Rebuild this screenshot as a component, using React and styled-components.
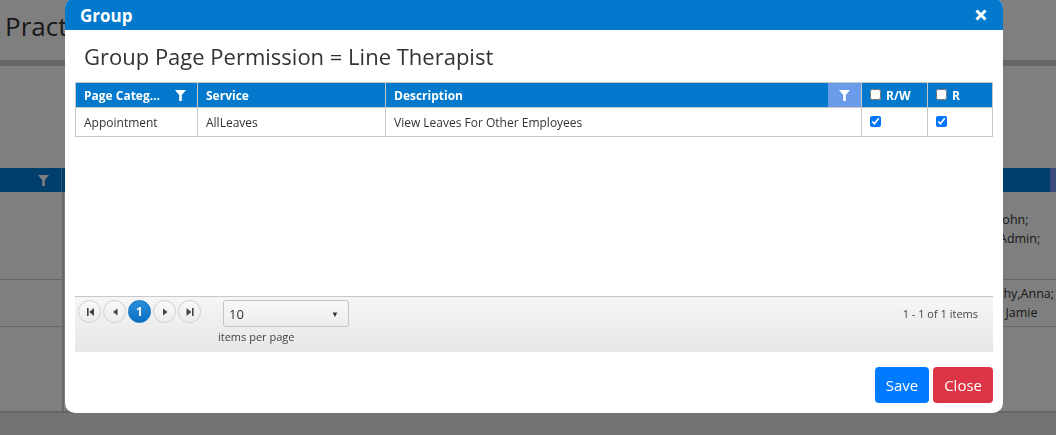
import React from 'react';
import styled, { createGlobalStyle } from 'styled-components';

const FONT = `"Segoe UI", "Open Sans", "Noto Sans", sans-serif`;

const COLUMNS = [
  { id: 'category', title: 'Page Category', filter: true },
  { id: 'service', title: 'Service' },
  { id: 'description', title: 'Description', filter: true, active: true },
  { id: 'rw', title: 'R/W', check: true },
  { id: 'r', title: 'R', check: true },
];

const ROWS = [
  { id: 1, category: 'Appointment', service: 'AllLeaves', description: 'View Leaves For Other Employees', rw: true, r: true },
];

// only the tail of these names shows past the dialog edge
const BG_ROWS = [
  { id: 1, height: 88, lines: ['John;', 'Admin;'] },
  { id: 2, height: 47, lines: ['thy,Anna;', ', Jamie'] },
  { id: 3, height: 85, lines: [] },
];

const GlobalStyle = createGlobalStyle`
  html, body {
    margin: 0;
    padding: 0;
    height: 100%;
    overflow: hidden;
    font-family: ${FONT};
    background: #fff;
  }
`;

const Funnel = ({ color = '#fff' }) => (
  <svg width="11" height="11" viewBox="0 0 11 11">
    <polygon points="0,0 11,0 6.8,5 6.8,11 4.2,11 4.2,5" fill={color} />
  </svg>
);

const PagerIcon = ({ kind }) => {
  const paths = {
    first: 'M2 1 H3.6 V9 H2 Z M9 1 V9 L4.2 5 Z',
    prev: 'M7.5 1.5 V8.5 L3 5 Z',
    next: 'M3 1.5 V8.5 L7.5 5 Z',
    last: 'M1.5 1 V9 L6.3 5 Z M7 1 H8.6 V9 H7 Z',
  };
  return (
    <svg width="10" height="10" viewBox="0 0 10 10">
      <path d={paths[kind]} fill="#444" />
    </svg>
  );
};

const App = () => (
  <>
    <GlobalStyle />
    <Page>
      <PageHeader>
        <PageTitle>Practice Management</PageTitle>
      </PageHeader>
      <HeaderRule />
      <Toolbar />
      <BgGrid>
        <BgHead>
          <BgHeadCell>
            <Funnel />
          </BgHeadCell>
          <BgHeadFill />
          <BgScroll />
        </BgHead>
        {BG_ROWS.map(row => (
          <BgRow key={row.id} $height={row.height}>
            <BgFirstCell />
            <BgFill />
            <BgTextCell>
              {row.lines.map(line => (
                <div key={line}>{line}</div>
              ))}
            </BgTextCell>
          </BgRow>
        ))}
      </BgGrid>
      <BgFooter />
    </Page>
    <Overlay />
    <Modal>
      <ModalHeader>
        <ModalTitle>Group</ModalTitle>
        <CloseIcon width="12" height="12" viewBox="0 0 12 12">
          <path d="M1.5 1.5 L10.5 10.5 M10.5 1.5 L1.5 10.5" stroke="#fff" strokeWidth="3" />
        </CloseIcon>
      </ModalHeader>
      <ModalBody>
        <Heading>Group Page Permission = Line Therapist</Heading>
        <Grid>
          <Table>
            {COLUMNS.map(col => (
              <HeadCell key={col.id}>
                {col.check && <Check type="checkbox" readOnly />}
                <HeadText>{col.title}</HeadText>
                {col.filter && (
                  <FilterButton $active={col.active}>
                    <Funnel />
                  </FilterButton>
                )}
              </HeadCell>
            ))}
            {ROWS.map(row =>
              COLUMNS.map(col => (
                <Cell key={`${row.id}-${col.id}`}>
                  {col.check ? <Check type="checkbox" checked readOnly /> : row[col.id]}
                </Cell>
              )),
            )}
          </Table>
          <GridSpace />
          <Pager>
            <PagerButtons>
              <PageButton><PagerIcon kind="first" /></PageButton>
              <PageButton><PagerIcon kind="prev" /></PageButton>
              <PageButton $active>1</PageButton>
              <PageButton><PagerIcon kind="next" /></PageButton>
              <PageButton><PagerIcon kind="last" /></PageButton>
            </PagerButtons>
            <PageSizes>
              <SizeSelect>
                <span>10</span>
                <Caret>▼</Caret>
              </SizeSelect>
              <SizeLabel>items per page</SizeLabel>
            </PageSizes>
            <PagerInfo>1 - 1 of 1 items</PagerInfo>
          </Pager>
        </Grid>
      </ModalBody>
      <ModalFooter>
        <Button $color="#007bff">Save</Button>
        <Button $color="#dc3545">Close</Button>
      </ModalFooter>
    </Modal>
  </>
);

export default App;

/* background page */

const Page = styled.div`
  display: flex;
  flex-direction: column;
  height: 435px;
`;

const PageHeader = styled.div`
  height: 60px;
  display: flex;
  align-items: flex-start;
  padding-left: 5px;
`;

const PageTitle = styled.h1`
  margin: 8px 0 0;
  font-size: 26px;
  font-weight: 400;
  color: #333;
  white-space: nowrap;
`;

const HeaderRule = styled.div`
  height: 6px;
  background: #cdcdcd;
`;

const Toolbar = styled.div`
  height: 102px;
`;

const BgGrid = styled.div`
  display: flex;
  flex-direction: column;
  flex: 1;
`;

const BgHead = styled.div`
  display: flex;
  height: 24px;
  background: #007ed6;
`;

const BgHeadCell = styled.div`
  width: 62px;
  display: flex;
  align-items: center;
  justify-content: flex-end;
  padding-right: 12px;
  box-sizing: border-box;
  border-right: 1px solid #6aa9dc;
`;

const BgHeadFill = styled.div`
  flex: 1;
`;

const BgScroll = styled.div`
  width: 6px;
  background: #7494f4;
`;

const BgRow = styled.div`
  display: flex;
  height: ${({ $height }) => $height}px;
  border-bottom: 1px solid #cfcfcf;
  box-sizing: border-box;
  &:last-child {
    border-bottom: none;
    height: auto;
    flex: 1;
  }
`;

const BgFirstCell = styled.div`
  width: 62px;
  border-right: 2px solid #cfcfcf;
`;

const BgFill = styled.div`
  flex: 1;
`;

const BgTextCell = styled.div`
  width: 57px;
  display: flex;
  flex-direction: column;
  justify-content: center;
  font-size: 12.5px;
  line-height: 19px;
  color: #333;
  white-space: nowrap;
  padding-bottom: 14px;
  ${BgRow}:nth-child(3) & {
    padding-bottom: 0;
  }
`;

const BgFooter = styled.div`
  height: 22px;
  background: #e6e6e6;
  border-top: 2px solid #cbcbcb;
`;

const Overlay = styled.div`
  position: fixed;
  inset: 0;
  background: rgba(0, 0, 0, 0.5);
`;

/* modal */

const Modal = styled.div`
  position: fixed;
  left: 65px;
  top: -2px;
  width: 938px;
  height: 415px;
  background: #fff;
  border-radius: 10px;
  overflow: hidden;
  display: flex;
  flex-direction: column;
`;

const ModalHeader = styled.div`
  height: 32px;
  flex: none;
  background: #0279cc;
  display: flex;
  align-items: center;
  justify-content: space-between;
  padding: 2px 16px 0 15px;
  box-sizing: border-box;
`;

const ModalTitle = styled.div`
  color: #fff;
  font-size: 17px;
  font-weight: 700;
`;

const CloseIcon = styled.svg`
  display: block;
`;

const ModalBody = styled.div`
  padding: 0 10px;
  display: flex;
  flex-direction: column;
`;

const Heading = styled.h2`
  margin: 12px 0 12px 9px;
  font-size: 22px;
  line-height: 28px;
  font-weight: 400;
  color: #333;
`;

const Grid = styled.div`
  height: 270px;
  display: flex;
  flex-direction: column;
`;

const Table = styled.div`
  display: grid;
  grid-template-columns: 122px 188px 476px 66px 1fr;
  border-top: 1px solid #c8c8c8;
  border-left: 1px solid #c8c8c8;
`;

const HeadCell = styled.div`
  height: 25px;
  background: #0279cc;
  color: #fff;
  font-size: 12px;
  font-weight: 700;
  display: flex;
  align-items: center;
  padding-left: 8px;
  box-sizing: border-box;
  border-right: 1px solid #c8c8c8;
  border-bottom: 1px solid #c8c8c8;
  min-width: 0;
`;

const HeadText = styled.span`
  flex: 1;
  min-width: 0;
  overflow: hidden;
  text-overflow: ellipsis;
  white-space: nowrap;
`;

const FilterButton = styled.div`
  width: 33px;
  height: 100%;
  flex: none;
  display: flex;
  align-items: center;
  justify-content: center;
  background: ${({ $active }) => ($active ? '#6b9ceb' : 'transparent')};
`;

const Check = styled.input`
  width: 11px;
  height: 11px;
  margin: 0 5px 1px 0;
  accent-color: #0075ff;
`;

const Cell = styled.div`
  height: 29px;
  display: flex;
  align-items: center;
  padding-left: 8px;
  box-sizing: border-box;
  font-size: 12px;
  color: #333;
  border-right: 1px solid #c8c8c8;
  border-bottom: 1px solid #c8c8c8;
  white-space: nowrap;
`;

const GridSpace = styled.div`
  flex: 1;
`;

const Pager = styled.div`
  height: 56px;
  box-sizing: border-box;
  border-top: 1px solid #c8c8c8;
  background: linear-gradient(#f6f6f6, #e8e6e6);
  display: flex;
  align-items: flex-start;
  padding: 3px 15px 0 3px;
`;

const PagerButtons = styled.div`
  display: flex;
  gap: 2px;
`;

const PageButton = styled.div`
  width: 23px;
  height: 23px;
  box-sizing: border-box;
  border-radius: 50%;
  display: flex;
  align-items: center;
  justify-content: center;
  font-size: 12px;
  font-weight: 700;
  color: #fff;
  border: 1px solid ${({ $active }) => ($active ? '#0a70c4' : '#cfcfcf')};
  background: ${({ $active }) =>
    $active ? 'linear-gradient(#2a8fdc, #0a6fc2)' : 'linear-gradient(#f9f9f9, #ececec)'};
`;

const PageSizes = styled.div`
  margin-left: 17px;
  display: flex;
  flex-direction: column;
`;

const SizeSelect = styled.div`
  margin: 0 0 0 5px;
  width: 126px;
  height: 27px;
  box-sizing: border-box;
  border: 1px solid #c4c4c4;
  border-radius: 3px;
  background: linear-gradient(#f8f8f8, #ededed);
  display: flex;
  align-items: center;
  justify-content: space-between;
  padding: 0 9px 0 5px;
  font-size: 13px;
  color: #333;
`;

const Caret = styled.span`
  font-size: 8px;
  color: #333;
`;

const SizeLabel = styled.div`
  margin-top: 2px;
  font-size: 11px;
  color: #444;
`;

const PagerInfo = styled.div`
  margin: 6px 0 0 auto;
  font-size: 11px;
  color: #444;
`;

const ModalFooter = styled.div`
  display: flex;
  justify-content: flex-end;
  gap: 4px;
  padding: 15px 10px 0;
`;

const Button = styled.button`
  height: 36px;
  padding: 0 11px;
  border: none;
  border-radius: 4px;
  background: ${({ $color }) => $color};
  color: #fff;
  font-family: ${FONT};
  font-size: 15px;
  cursor: pointer;
`;
